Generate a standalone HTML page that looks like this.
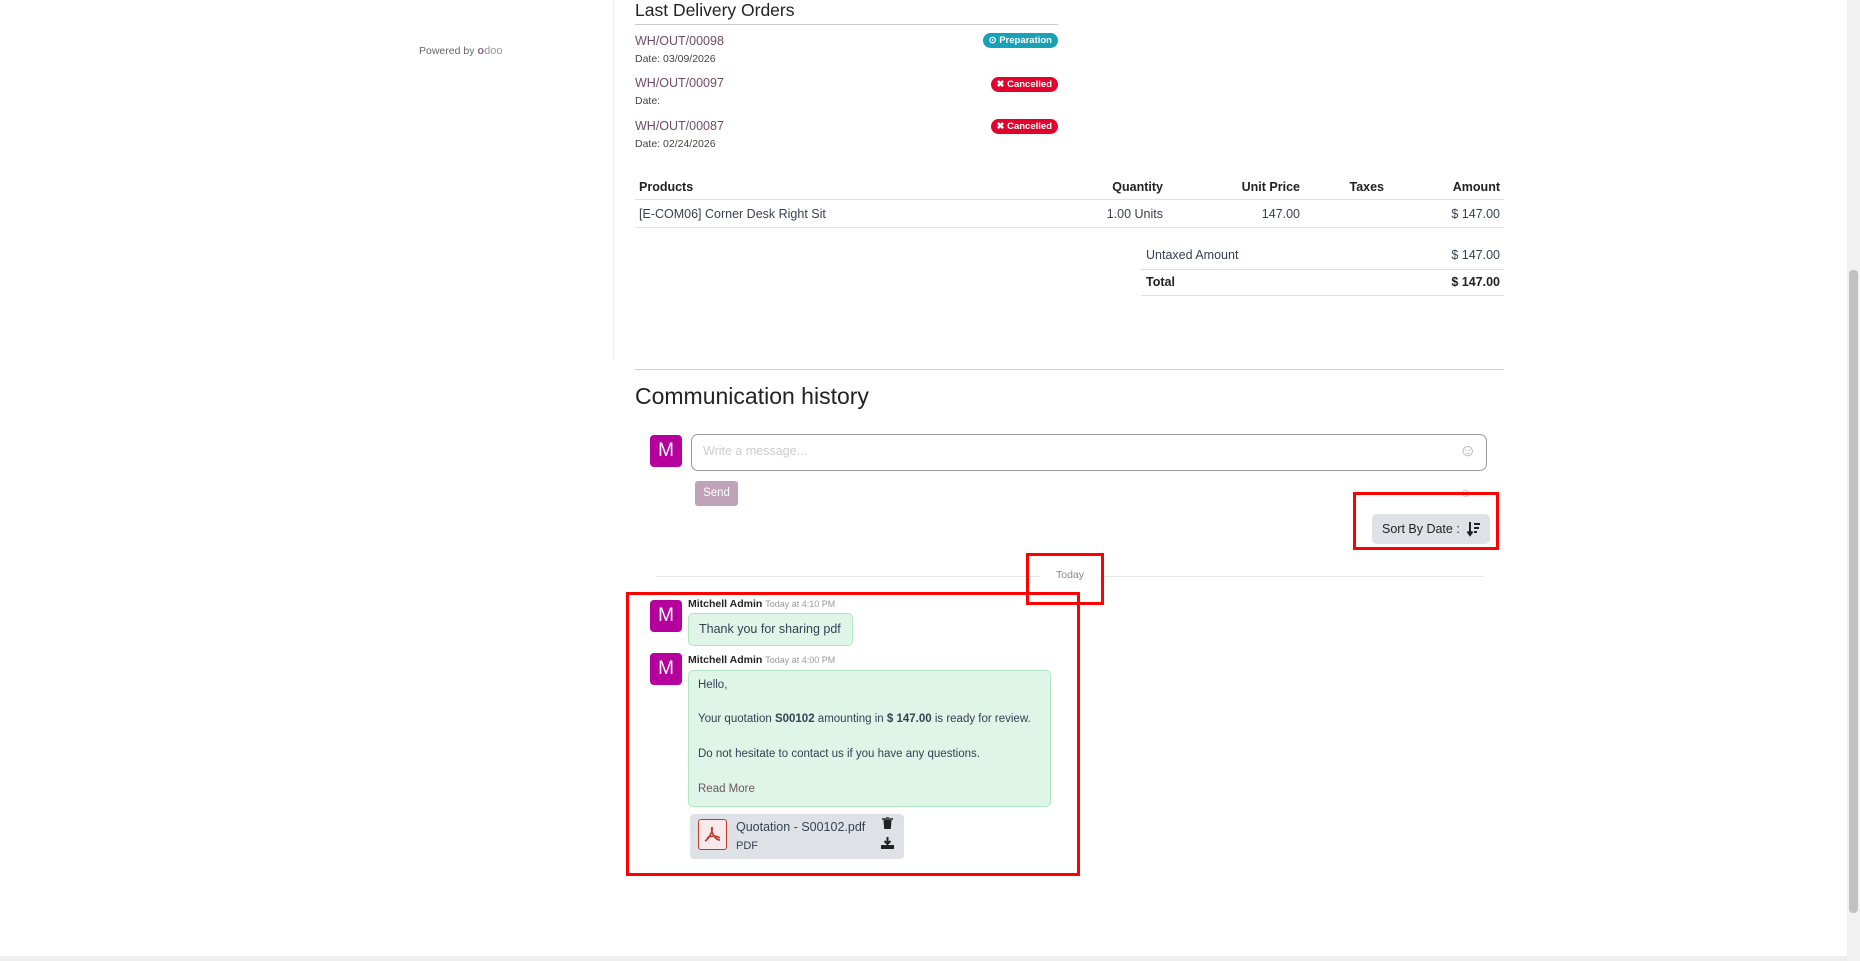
<!DOCTYPE html>
<html><head><meta charset="utf-8"><style>
*{box-sizing:border-box;margin:0;padding:0}
body{width:1860px;height:961px;background:#fff;font-family:"Liberation Sans",sans-serif;color:#374151;font-size:12.5px;position:relative;overflow:hidden}
.a{position:absolute;white-space:nowrap}
.lk{color:#714b67;font-size:12.5px}
.sm{font-size:10.5px;color:#444}
.badge{position:absolute;right:802px;height:15px;border-radius:8px;color:#fff;font-size:9.5px;font-weight:bold;padding:0 6px;line-height:15px;white-space:nowrap}
.hl{position:absolute;height:1px;background:#dee2e6}
.th{font-weight:bold;color:#222;font-size:12.5px}
.av{position:absolute;width:32px;height:32px;background:#b5009e;color:#fff;border-radius:4px;font-size:19px;text-align:center;line-height:32px}
.rb{position:absolute;border:3px solid #f00}
</style></head><body>
<div class="a" style="left:419px;top:45px;font-size:10.5px;color:#666">Powered by <span style="color:#8f6886;font-weight:bold;font-size:11px">o</span><span style="color:#999;font-size:11px">doo</span></div>
<div style="position:absolute;left:613px;top:0;width:1px;height:360px;background:#eee"></div>

<div class="a" style="left:635px;top:0px;font-size:17.5px;color:#222">Last Delivery Orders</div>
<div class="hl" style="left:635px;top:24px;width:423px;background:#ccc"></div>
<div class="a lk" style="left:635px;top:34px">WH/OUT/00098</div>
<div class="a sm" style="left:635px;top:53px">Date: 03/09/2026</div>
<div class="badge" style="top:33px;background:#17a2b8">⊙ Preparation</div>
<div class="a lk" style="left:635px;top:76px">WH/OUT/00097</div>
<div class="a sm" style="left:635px;top:95px">Date:</div>
<div class="badge" style="top:77px;background:#e3002b">✖ Cancelled</div>
<div class="a lk" style="left:635px;top:119px">WH/OUT/00087</div>
<div class="a sm" style="left:635px;top:138px">Date: 02/24/2026</div>
<div class="badge" style="top:119px;background:#e3002b">✖ Cancelled</div>

<div class="a th" style="left:639px;top:180px">Products</div>
<div class="a th" style="right:697px;top:180px">Quantity</div>
<div class="a th" style="right:560px;top:180px">Unit Price</div>
<div class="a th" style="right:476px;top:180px">Taxes</div>
<div class="a th" style="right:360px;top:180px">Amount</div>
<div class="hl" style="left:635px;top:199px;width:869px"></div>
<div class="a" style="left:639px;top:207px">[E-COM06] Corner Desk Right Sit</div>
<div class="a" style="right:697px;top:207px">1.00 Units</div>
<div class="a" style="right:560px;top:207px">147.00</div>
<div class="a" style="right:360px;top:207px">$ 147.00</div>
<div class="hl" style="left:635px;top:227px;width:869px"></div>
<div class="a" style="left:1146px;top:248px">Untaxed Amount</div>
<div class="a" style="right:360px;top:248px">$ 147.00</div>
<div class="hl" style="left:1141px;top:269px;width:363px"></div>
<div class="a th" style="left:1146px;top:275px">Total</div>
<div class="a th" style="right:360px;top:275px">$ 147.00</div>
<div class="hl" style="left:1141px;top:295px;width:363px"></div>

<div class="hl" style="left:635px;top:369px;width:869px;background:#ccc"></div>
<div class="a" style="left:635px;top:383px;font-size:23px;color:#222">Communication history</div>

<div class="av" style="left:650px;top:435px">M</div>
<div style="position:absolute;left:691px;top:434px;width:796px;height:37px;border:1px solid #999;border-radius:7px"></div>
<div class="a" style="left:703px;top:444px;color:#ccc">Write a message...</div>
<div class="a" style="left:1459px;top:441px;color:#aaa;font-size:17px">☺</div>
<div style="position:absolute;left:695px;top:481px;width:43px;height:25px;background:#c0a2b9;border-radius:3px;color:#fff;font-size:11.5px;text-align:center;line-height:25px">Send</div>
<div class="a" style="left:1462px;top:484px;color:#ccc;font-size:14px;transform:rotate(45deg)">⌀</div>
<div style="position:absolute;left:1372px;top:514px;width:118px;height:30px;background:#dee2e6;border-radius:5px;color:#222;font-size:12.5px;line-height:30px;padding-left:10px;white-space:nowrap">Sort By Date :</div>
<svg style="position:absolute;left:1467px;top:521px" width="14" height="16" viewBox="0 0 14 16"><path d="M3 1v12M0.5 10.5L3 14l2.5-3.5" stroke="#222" stroke-width="2" fill="none"/><path d="M7 3h6M7 7h5M7 11h3" stroke="#222" stroke-width="2"/></svg>
<div class="rb" style="left:1353px;top:492px;width:146px;height:58px"></div>

<div class="hl" style="left:656px;top:576px;width:827px;background:#e5e5e5"></div>
<div class="a" style="left:1040px;top:569px;background:#fff;padding:0 16px;font-size:10.5px;color:#888">Today</div>
<div class="rb" style="left:1026px;top:553px;width:78px;height:52px"></div>

<div class="av" style="left:650px;top:600px">M</div>
<div class="a" style="left:688px;top:598px;font-size:10.5px;font-weight:bold;color:#222">Mitchell Admin <span style="font-weight:normal;color:#999;font-size:9px">Today at 4:10 PM</span></div>
<div style="position:absolute;left:688px;top:613px;width:165px;height:33px;background:#dff5e7;border:1px solid #b2e7c5;border-radius:5px;line-height:31px;padding-left:10px;font-size:12.5px;white-space:nowrap">Thank you for sharing pdf</div>

<div class="av" style="left:650px;top:653px">M</div>
<div class="a" style="left:688px;top:654px;font-size:10.5px;font-weight:bold;color:#222">Mitchell Admin <span style="font-weight:normal;color:#999;font-size:9px">Today at 4:00 PM</span></div>
<div style="position:absolute;left:688px;top:670px;width:363px;height:137px;background:#dff5e7;border:1px solid #b2e7c5;border-radius:5px"></div>
<div class="a" style="left:698px;top:679px;font-size:11.5px">Hello,</div>
<div class="a" style="left:698px;top:713px;font-size:11.5px">Your quotation <b>S00102</b> amounting in <b>$ 147.00</b> is ready for review.</div>
<div class="a" style="left:698px;top:748px;font-size:11.5px">Do not hesitate to contact us if you have any questions.</div>
<div class="a" style="left:698px;top:783px;font-size:11.5px;color:#6d5766">Read More</div>

<div style="position:absolute;left:690px;top:814px;width:214px;height:45px;background:#dee2e6;border-radius:4px"></div>
<div style="position:absolute;left:698px;top:819px;width:29px;height:31px;border:1.5px solid #c0392b;border-radius:3px;background:#f8eaea"></div>
<svg style="position:absolute;left:703px;top:825px" width="19" height="19" viewBox="0 0 19 19"><path d="M9 2c-1 3 0 6 2 9s4 4 6 4M9 2c1 3-1 7-3 10s-4 4-4 4M4 13c3-2 8-3 13 0" stroke="#c0392b" stroke-width="1.6" fill="none"/></svg>
<div class="a" style="left:736px;top:820px;font-size:12.5px">Quotation - S00102.pdf</div>
<div class="a" style="left:736px;top:840px;font-size:11px">PDF</div>
<svg style="position:absolute;left:882px;top:817px" width="11" height="12" viewBox="0 0 11 12"><path d="M0 2h11M4 0h3" stroke="#222" stroke-width="1.6"/><path d="M1.5 3h8l-0.7 9h-6.6z" fill="#222"/></svg>
<svg style="position:absolute;left:881px;top:837px" width="13" height="12" viewBox="0 0 13 12"><path d="M6.5 0v6M3.5 4l3 3 3-3" stroke="#222" stroke-width="2" fill="none"/><path d="M0 8h13v4H0z" fill="#222"/></svg>
<div class="rb" style="left:626px;top:592px;width:454px;height:284px"></div>

<div style="position:absolute;left:1847px;top:0;width:13px;height:961px;background:#f1f1f1"></div>
<div style="position:absolute;left:1849px;top:270px;width:9px;height:643px;background:#c1c1c1;border-radius:4px"></div>
<div style="position:absolute;left:0;top:956px;width:1847px;height:5px;background:#eee"></div>
</body></html>
